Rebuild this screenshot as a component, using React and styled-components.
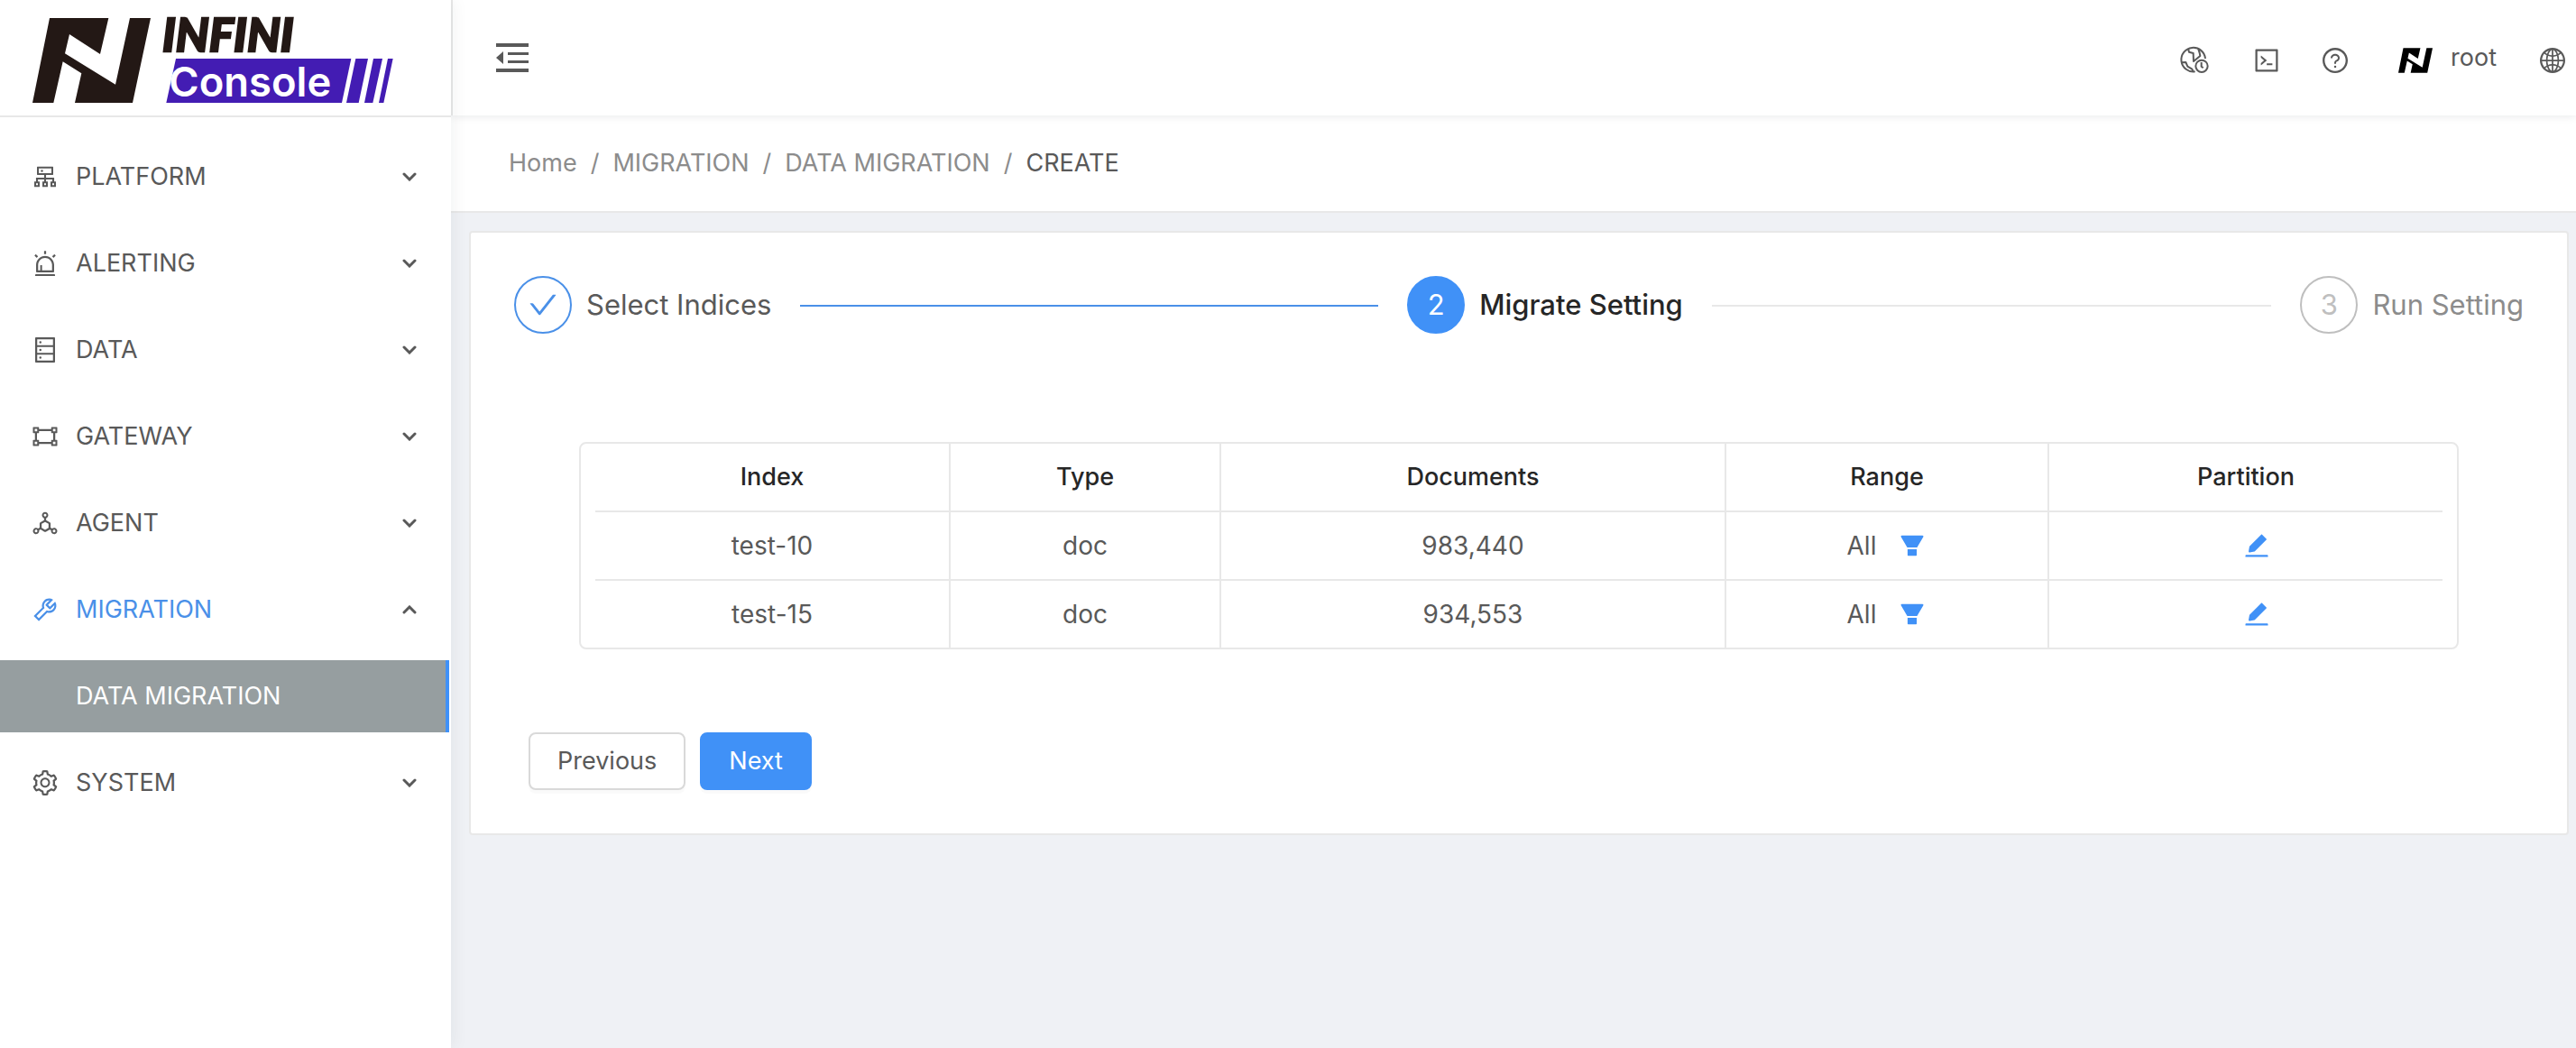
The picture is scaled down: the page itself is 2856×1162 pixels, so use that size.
import React from "react";
import styled, { createGlobalStyle, css } from "styled-components";
import {
  AiFillEdit,
  AiFillFilter,
  AiOutlineAlert,
  AiOutlineCheck,
  AiOutlineCluster,
  AiOutlineCode,
  AiOutlineDatabase,
  AiOutlineDeploymentUnit,
  AiOutlineGateway,
  AiOutlineGlobal,
  AiOutlineQuestionCircle,
  AiOutlineSetting,
  AiOutlineTool,
} from "react-icons/ai";

const color = {
  primary: "#4091f7",
  link: "#4a90e8",
  text: "#595959",
  heading: "#262626",
  muted: "#8c8c8c",
  disabled: "#bfbfbf",
  border: "#e8e8e8",
  page: "#eff1f5",
  selected: "#969ea0",
};

const GlobalStyle = createGlobalStyle`
  *, *::before, *::after { box-sizing: border-box; }
  body {
    margin: 0;
    background: ${color.page};
    color: ${color.text};
    font-family: Inter, "Open Sans", sans-serif;
    font-size: 27px;
    line-height: 42px;
  }
  button { font: inherit; color: inherit; cursor: pointer; }
  a { color: inherit; text-decoration: none; }
`;

const Layout = styled.div`
  display: flex;
  min-height: 100vh;
`;

const Sidebar = styled.aside`
  flex: none;
  width: 500px;
  background: #fff;
  box-shadow: 4px 0 16px rgba(29, 35, 41, 0.05);
  z-index: 2;
`;

const Brand = styled.a`
  display: block;
  height: 130px;
  border-bottom: 2px solid ${color.border};

  svg { display: block; width: 500px; height: 128px; }
`;

const Menu = styled.nav`
  display: flex;
  flex-direction: column;
  gap: 16px;
  padding: 26px 2px 0 0;
`;

const menuRow = css`
  display: flex;
  align-items: center;
  width: 100%;
  height: 80px;
  padding: 0 36px 0 34px;
  border: 0;
  background: none;
  text-align: left;
`;

const MenuItem = styled.button`
  ${menuRow}
  color: ${(p) => (p.$active ? color.link : color.text)};

  > svg:first-child { flex: none; width: 32px; height: 32px; margin-right: 18px; }
`;

const MenuLabel = styled.span`
  flex: 1;
`;

const Arrow = styled.svg`
  width: 16px;
  height: 10px;
  stroke: ${color.text};
  stroke-width: 3;
  stroke-linecap: round;
  fill: none;
`;

const SubMenuItem = styled.a`
  ${menuRow}
  padding-left: 84px;
  border-right: 4px solid ${color.primary};
  background: ${color.selected};
  color: #fff;
`;

const Main = styled.div`
  flex: 1;
  min-width: 0;
`;

const Header = styled.header`
  position: relative;
  z-index: 1;
  display: flex;
  align-items: center;
  justify-content: space-between;
  height: 128px;
  padding: 0 10px 0 46px;
  border-left: 2px solid ${color.border};
  background: #fff;
  box-shadow: 0 2px 8px rgba(0, 21, 41, 0.08);
`;

const IconButton = styled.button`
  display: flex;
  padding: ${(p) => (p.$low ? "6px 0 0" : "0")};
  border: 0;
  background: none;

  svg { width: ${(p) => p.$size || 32}px; height: ${(p) => p.$size || 32}px; }
`;

const Actions = styled.div`
  display: flex;
  align-items: center;
  gap: 44px;
`;

const Account = styled.button`
  display: flex;
  align-items: center;
  gap: 20px;
  padding: 0 2px 0 10px;
  border: 0;
  background: none;

  svg { width: 38px; height: 28px; margin-top: 6px; }
`;

const Breadcrumb = styled.nav`
  display: flex;
  gap: 15px;
  padding: 32px 64px;
  border-bottom: 2px solid ${color.border};
  background: #fff;
  color: ${color.muted};
`;

const Current = styled.span`
  color: ${color.text};
`;

const Card = styled.main`
  margin: 20px 8px 20px 20px;
  padding: 48px;
  border: 2px solid ${color.border};
  border-radius: 4px;
  background: #fff;
`;

const Steps = styled.ol`
  display: flex;
  gap: 32px;
  margin: 0 0 120px;
  padding: 0;
  list-style: none;
  font-size: 31px;
  line-height: 64px;
`;

const Step = styled.li`
  display: flex;
  align-items: center;
  flex: 1;
  white-space: nowrap;
  color: ${color.text};

  &:last-child { flex: none; }

  ${(p) => p.$state === "active" && css`color: ${color.heading}; font-weight: 500;`}
  ${(p) => p.$state === "wait" && css`color: ${color.muted};`}
`;

const stepMarkers = {
  done: css`border-color: ${color.link}; color: ${color.link};`,
  active: css`border-color: ${color.primary}; background: ${color.primary}; color: #fff;`,
  wait: css`border-color: ${color.disabled}; color: ${color.disabled};`,
};

const StepMarker = styled.span`
  display: flex;
  align-items: center;
  justify-content: center;
  width: 64px;
  height: 64px;
  margin-right: 16px;
  border: 2px solid;
  border-radius: 50%;
  font-weight: 400;
  ${(p) => stepMarkers[p.$state]}

  svg { width: 36px; height: 36px; }
`;

const StepLine = styled.span`
  flex: 1;
  height: 2px;
  margin: 2px 0 0 32px;
  background: ${(p) => (p.$state === "done" ? color.link : color.border)};
`;

const TableFrame = styled.div`
  margin: 0 72px 92px;
  padding: 0 16px;
  border: 2px solid ${color.border};
  border-radius: 8px;
`;

const Table = styled.table`
  width: 100%;
  table-layout: fixed;
  border-collapse: separate;
  border-spacing: 0;
  text-align: center;

  th, td {
    height: 76px;
    padding: 0 16px;
    border-right: 2px solid ${color.border};
    border-bottom: 2px solid ${color.border};
  }
  th { color: ${color.heading}; font-weight: 500; }
  td { font-size: 28px; }
  th:last-child, td:last-child { border-right: 0; }
  tbody tr:last-child td { height: 74px; border-bottom: 0; }
`;

const Col = styled.col`
  width: ${(p) => (p.$share * 100) / 1024}%;
`;

const CellContent = styled.span`
  display: flex;
  align-items: center;
  justify-content: center;
`;

const CellAction = styled.button`
  display: flex;
  margin-left: 24px;
  padding: 0;
  border: 0;
  background: none;
  color: ${color.primary};

  svg { width: 32px; height: 32px; }
`;

const Footer = styled.div`
  display: flex;
  gap: 16px;
  padding-left: 16px;
`;

const Button = styled.button`
  height: 64px;
  padding: 0 30px;
  border: 2px solid ${(p) => (p.$primary ? color.primary : "#d9d9d9")};
  border-radius: 8px;
  background: ${(p) => (p.$primary ? color.primary : "#fff")};
  color: ${(p) => (p.$primary ? "#fff" : color.text)};
  box-shadow: 0 4px 0 rgba(0, 0, 0, 0.02);
`;

const markPoints =
  "165,60 361,60 333,180 231,114 216,178 384,281 432,60 501,60 441,342 249,342 271,244 209,205 178,342 108,342";

const Logo = () => (
  <svg viewBox="0 0 1500 384" role="img" aria-label="INFINI Console">
    <polygon points={markPoints} fill="#231815" />
    <text
      x="540"
      y="171"
      fill="#231815"
      stroke="#231815"
      strokeWidth="7"
      fontFamily="Lato"
      fontSize="154"
      fontWeight="900"
      fontStyle="italic"
    >
      INFINI
    </text>
    <g fill="#431cb3">
      <polygon points="585,195 1168,195 1137,342 553,342" />
      <polygon points="1183,195 1224,195 1193,342 1152,342" />
      <polygon points="1242,195 1272,195 1240,342 1212,342" />
      <polygon points="1290,195 1307,195 1276,342 1260,342" />
    </g>
    <text x="562" y="320" fill="#fff" fontFamily="Inter" fontSize="136" fontWeight="600">
      Console
    </text>
  </svg>
);

const AvatarMark = () => (
  <svg viewBox="108 60 393 282" aria-hidden="true">
    <polygon points={markPoints} fill="#000" />
  </svg>
);

const FoldIcon = () => (
  <svg viewBox="0 0 40 40" fill="currentColor" aria-hidden="true">
    <path d="M2 4h36v4H2zM15 14h23v3H15zM15 23h23v3H15zM2 32h36v4H2zM2 20l8-7v14z" />
  </svg>
);

const WorldClockIcon = () => (
  <svg viewBox="100 141 120 120" fill="none" stroke="currentColor" strokeWidth="6" aria-hidden="true">
    <path d="M196 195a40 40 0 1 0-34 43" />
    <path d="M139 161l3 12 14 4 1 27 22-18-2-10-4-13" strokeLinejoin="round" />
    <path d="M116 208l15-1 6 14 15 9 4 9" strokeLinejoin="round" />
    <circle cx="184" cy="220" r="20" />
    <path d="M183 207v14l6 5" />
  </svg>
);

const Chevron = ({ up }) => (
  <Arrow viewBox="0 0 16 10" aria-hidden="true">
    <path d={up ? "M2 8l6-6 6 6" : "M2 2l6 6 6-6"} />
  </Arrow>
);

const menu = [
  { label: "PLATFORM", Icon: AiOutlineCluster },
  { label: "ALERTING", Icon: AiOutlineAlert },
  { label: "DATA", Icon: AiOutlineDatabase },
  { label: "GATEWAY", Icon: AiOutlineGateway },
  { label: "AGENT", Icon: AiOutlineDeploymentUnit },
  { label: "MIGRATION", Icon: AiOutlineTool, open: true, children: ["DATA MIGRATION"] },
  { label: "SYSTEM", Icon: AiOutlineSetting },
];

const steps = [
  { title: "Select Indices", state: "done" },
  { title: "Migrate Setting", state: "active" },
  { title: "Run Setting", state: "wait" },
];

const columns = [
  { title: "Index", share: 197 },
  { title: "Type", share: 150 },
  { title: "Documents", share: 280 },
  { title: "Range", share: 179 },
  { title: "Partition", share: 218 },
];

const rows = [
  { index: "test-10", type: "doc", documents: "983,440", range: "All" },
  { index: "test-15", type: "doc", documents: "934,553", range: "All" },
];

export default function App() {
  return (
    <>
      <GlobalStyle />
      <Layout>
        <Sidebar>
          <Brand href="#home">
            <Logo />
          </Brand>
          <Menu aria-label="Main">
            {menu.map(({ label, Icon, open, children = [] }) => (
              <React.Fragment key={label}>
                <MenuItem type="button" $active={open} aria-expanded={!!open}>
                  <Icon />
                  <MenuLabel>{label}</MenuLabel>
                  <Chevron up={open} />
                </MenuItem>
                {children.map((child) => (
                  <SubMenuItem key={child} href="#data-migration" aria-current="page">
                    {child}
                  </SubMenuItem>
                ))}
              </React.Fragment>
            ))}
          </Menu>
        </Sidebar>
        <Main>
          <Header>
            <IconButton type="button" $size={40} aria-label="Collapse menu">
              <FoldIcon />
            </IconButton>
            <Actions>
              <IconButton type="button" $low $size={40} aria-label="Time zone">
                <WorldClockIcon />
              </IconButton>
              <IconButton type="button" $low aria-label="Console">
                <AiOutlineCode />
              </IconButton>
              <IconButton type="button" $low aria-label="Help">
                <AiOutlineQuestionCircle />
              </IconButton>
              <Account type="button">
                <AvatarMark />
                root
              </Account>
              <IconButton type="button" $low aria-label="Language">
                <AiOutlineGlobal />
              </IconButton>
            </Actions>
          </Header>
          <Breadcrumb aria-label="Breadcrumb">
            <a href="#home">Home</a>
            <span>/</span>
            <a href="#migration">MIGRATION</a>
            <span>/</span>
            <a href="#data-migration">DATA MIGRATION</a>
            <span>/</span>
            <Current aria-current="page">CREATE</Current>
          </Breadcrumb>
          <Card>
            <Steps>
              {steps.map(({ title, state }, i) => (
                <Step key={title} $state={state}>
                  <StepMarker $state={state}>
                    {state === "done" ? <AiOutlineCheck aria-label="Done" /> : i + 1}
                  </StepMarker>
                  {title}
                  {i < steps.length - 1 && <StepLine $state={state} />}
                </Step>
              ))}
            </Steps>
            <TableFrame>
              <Table>
                <colgroup>
                  {columns.map((c) => (
                    <Col key={c.title} $share={c.share} />
                  ))}
                </colgroup>
                <thead>
                  <tr>
                    {columns.map((c) => (
                      <th key={c.title} scope="col">{c.title}</th>
                    ))}
                  </tr>
                </thead>
                <tbody>
                  {rows.map((row) => (
                    <tr key={row.index}>
                      <td>{row.index}</td>
                      <td>{row.type}</td>
                      <td>{row.documents}</td>
                      <td>
                        <CellContent>
                          {row.range}
                          <CellAction type="button" aria-label={`Filter ${row.index}`}>
                            <AiFillFilter />
                          </CellAction>
                        </CellContent>
                      </td>
                      <td>
                        <CellContent>
                          <CellAction type="button" aria-label={`Edit partition of ${row.index}`}>
                            <AiFillEdit />
                          </CellAction>
                        </CellContent>
                      </td>
                    </tr>
                  ))}
                </tbody>
              </Table>
            </TableFrame>
            <Footer>
              <Button type="button">Previous</Button>
              <Button type="button" $primary>Next</Button>
            </Footer>
          </Card>
        </Main>
      </Layout>
    </>
  );
}
